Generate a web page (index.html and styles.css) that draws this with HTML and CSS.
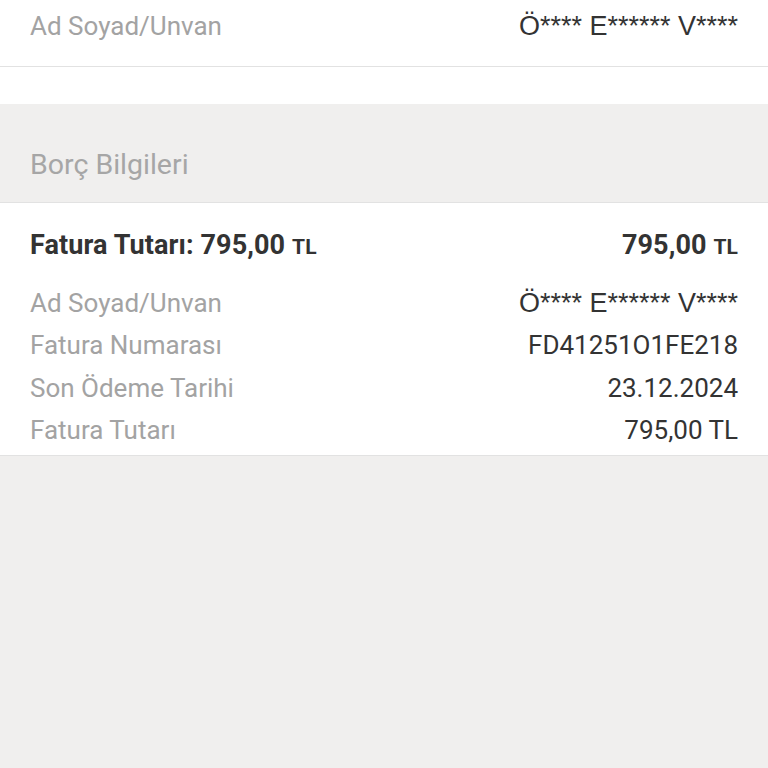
FILE: index.html
```html
<!DOCTYPE html>
<html lang="tr">
<head>
<meta charset="utf-8">
<link rel="stylesheet" href="styles.css">
</head>
<body>
<div class="top">
  <div class="row">
    <span class="label">Ad Soyad/Unvan</span>
    <span class="value masked">Ö**** E****** V****</span>
  </div>
</div>
<div class="spacer"></div>
<div class="section-head">Borç Bilgileri</div>
<div class="card">
  <div class="row bold-row">
    <span class="title">Fatura Tutarı: 795,00 <small>TL</small></span>
    <span class="title">795,00 <small>TL</small></span>
  </div>
  <div class="details">
    <div class="row">
      <span class="label">Ad Soyad/Unvan</span>
      <span class="value masked">Ö**** E****** V****</span>
    </div>
    <div class="row">
      <span class="label">Fatura Numarası</span>
      <span class="value">FD41251O1FE218</span>
    </div>
    <div class="row">
      <span class="label">Son Ödeme Tarihi</span>
      <span class="value">23.12.2024</span>
    </div>
    <div class="row">
      <span class="label">Fatura Tutarı</span>
      <span class="value">795,00 TL</span>
    </div>
  </div>
</div>
</body>
</html>
```
FILE: styles.css
```css
html, body {
  margin: 0;
  padding: 0;
  background: #f0efee;
  font-family: Roboto, "Noto Sans", sans-serif;
  height: 768px;
  overflow: hidden;
}
.top {
  background: #fff;
  height: 67px;
  border-bottom: 1px solid #e2e2e2;
  padding: 0 30px;
  box-sizing: border-box;
}
.top .row {
  height: 52px;
}
.spacer {
  height: 37px;
  background: #fff;
}
.section-head {
  height: 99px;
  box-sizing: border-box;
  padding: 41px 30px 0;
  font-size: 28.5px;
  color: #a6a6a6;
  line-height: 40px;
  border-bottom: 1px solid #e2e2e2;
}
.card {
  background: #fff;
  padding: 22px 30px 0;
  height: 253px;
  box-sizing: border-box;
  border-bottom: 1px solid #e2e2e2;
}
.row {
  display: flex;
  justify-content: space-between;
  align-items: center;
}
.bold-row {
  height: 40px;
  margin-bottom: 17px;
}
.title {
  font-weight: 700;
  font-size: 27px;
  color: #333;
  letter-spacing: 0.1px;
}
.title small {
  font-size: 21px;
}
.details .row {
  height: 42.3px;
}
.label {
  font-size: 26px;
  color: #a3a3a3;
}
.value {
  font-size: 26px;
  color: #333;
}
.masked {
  font-family: "Liberation Sans", Arial, sans-serif;
  font-size: 27px;
}
```
